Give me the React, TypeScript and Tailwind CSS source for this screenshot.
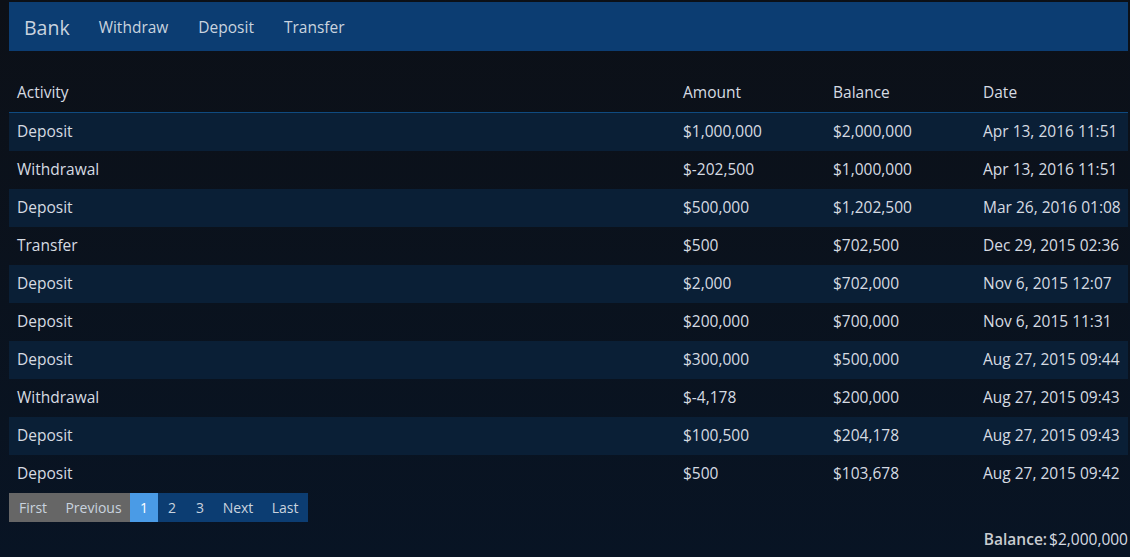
type Row = {
  activity: string;
  amount: string;
  balance: string;
  date: string;
};

const rows: Row[] = [
  { activity: 'Deposit', amount: '$1,000,000', balance: '$2,000,000', date: 'Apr 13, 2016 11:51' },
  { activity: 'Withdrawal', amount: '$-202,500', balance: '$1,000,000', date: 'Apr 13, 2016 11:51' },
  { activity: 'Deposit', amount: '$500,000', balance: '$1,202,500', date: 'Mar 26, 2016 01:08' },
  { activity: 'Transfer', amount: '$500', balance: '$702,500', date: 'Dec 29, 2015 02:36' },
  { activity: 'Deposit', amount: '$2,000', balance: '$702,000', date: 'Nov 6, 2015 12:07' },
  { activity: 'Deposit', amount: '$200,000', balance: '$700,000', date: 'Nov 6, 2015 11:31' },
  { activity: 'Deposit', amount: '$300,000', balance: '$500,000', date: 'Aug 27, 2015 09:44' },
  { activity: 'Withdrawal', amount: '$-4,178', balance: '$200,000', date: 'Aug 27, 2015 09:43' },
  { activity: 'Deposit', amount: '$100,500', balance: '$204,178', date: 'Aug 27, 2015 09:43' },
  { activity: 'Deposit', amount: '$500', balance: '$103,678', date: 'Aug 27, 2015 09:42' },
];

const cols = 'grid grid-cols-[666px_150px_150px_1fr]';

export default function App() {
  return (
    <div
      className="min-h-[557px] w-full bg-gradient-to-b from-[#0c1017] to-[#081424] text-[#d6dbe2] pl-[9px] pr-[2px] pt-[2px]"
      style={{ fontFamily: '"Open Sans", "Noto Sans", sans-serif' }}
    >
      {/* barra de navegação */}
      <nav className="h-[49px] bg-[#0c3d72] flex items-center pl-[15px] pt-[2px]">
        <span className="text-[19.5px] text-[#c9d3df] mr-[14px]">Bank</span>
        <a className="px-[15px] text-[15.5px] text-[#c9d3df]">Withdraw</a>
        <a className="px-[15px] text-[15.5px] text-[#c9d3df]">Deposit</a>
        <a className="px-[15px] text-[15.5px] text-[#c9d3df]">Transfer</a>
      </nav>

      <div className="mt-[21px]">
        <div className={`${cols} h-[41px] items-center border-b border-[#0f4a80] text-[15.5px] pt-[1px]`}>
          <div className="pl-2">Activity</div>
          <div className="pl-2">Amount</div>
          <div className="pl-2">Balance</div>
          <div className="pl-2">Date</div>
        </div>
        {rows.map((r, i) => (
          <div
            key={i}
            className={`${cols} h-[38px] items-center text-[15.5px] pb-[1px] ${i % 2 === 0 ? 'bg-[#0a1f36]' : ''}`}
          >
            <div className="pl-2">{r.activity}</div>
            <div className="pl-2">{r.amount}</div>
            <div className="pl-2">{r.balance}</div>
            <div className="pl-2 whitespace-nowrap">{r.date}</div>
          </div>
        ))}
      </div>

      <div className="flex h-[29px] text-[14px] text-[#c9d3df]">
        <span className="bg-[#666666] w-[48px] flex items-center justify-center">First</span>
        <span className="bg-[#666666] w-[73px] flex items-center justify-center">Previous</span>
        <span className="bg-[#4a9be6] text-white w-[28px] flex items-center justify-center">1</span>
        <span className="bg-[#0c3d72] w-[28px] flex items-center justify-center">2</span>
        <span className="bg-[#0c3d72] w-[28px] flex items-center justify-center">3</span>
        <span className="bg-[#0c3d72] w-[48px] flex items-center justify-center">Next</span>
        <span className="bg-[#0c3d72] w-[46px] flex items-center justify-center">Last</span>
      </div>

      <div className="flex justify-end mt-[6px] text-[15.5px]">
        <span className="font-semibold text-[#c9ccd0] mr-[2px]">Balance:</span>
        <span>$2,000,000</span>
      </div>
    </div>
  );
}
